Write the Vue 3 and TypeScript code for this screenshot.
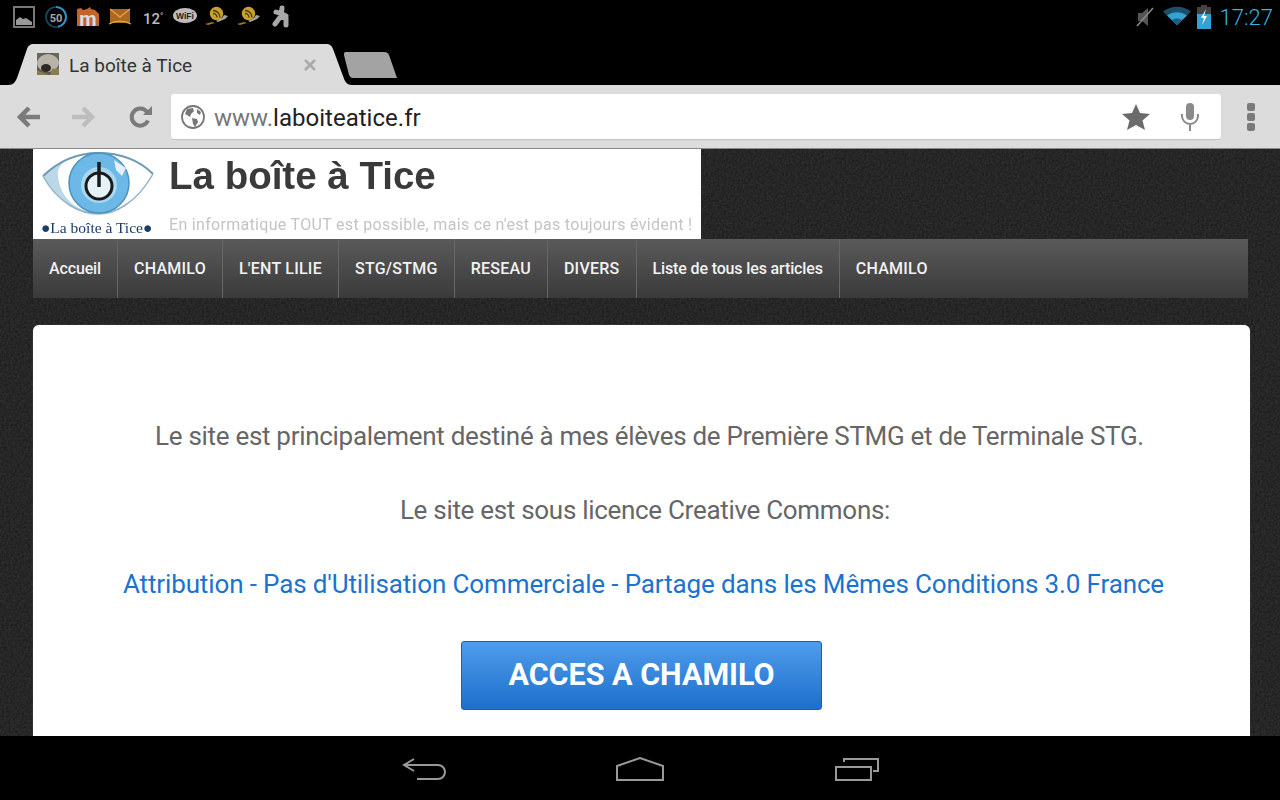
<template>
  <div class="screen">
    <div class="statusbar">
      <div class="notifs">
        <svg class="ico" viewBox="0 0 22 28"><rect x="1" y="4" width="20" height="20" fill="none" stroke="#777" stroke-width="2"/><path d="M3 22v-5l4-3 3 2 3-1 6 4v3z" fill="#999"/></svg>
        <svg class="ico" viewBox="0 0 22 28"><circle cx="11" cy="14" r="10" fill="none" stroke="#1c4a63" stroke-width="1.600"/><path d="M11 4a10 10 0 0 1 2 19.800" fill="none" stroke="#2a93c8" stroke-width="2"/><text x="11" y="18.500" text-anchor="middle" class="t50">50</text></svg>
        <svg class="ico" viewBox="0 0 22 28"><path d="M0 6l4-1 2 2 4-1 3-2 1 2 4 1 4 4v12H0z" fill="#c2652a"/><text x="11" y="23" text-anchor="middle" class="tm">m</text></svg>
        <svg class="ico" viewBox="0 0 22 28"><path d="M1 6h20v14H1z" fill="#a9691f"/><path d="M1 6l10 8 10-8" fill="none" stroke="#e0a040" stroke-width="1.400"/><path d="M0 21c7-4 14-4 22 0" fill="none" stroke="#d4b13c" stroke-width="1.200"/></svg>
        <span class="temp">12<small>°</small></span>
        <svg class="ico wide" viewBox="0 0 24 28"><ellipse cx="12" cy="12.500" rx="12" ry="7.500" fill="#bdbdbd"/><text x="12" y="15.500" text-anchor="middle" class="twifi">WiFi</text></svg>
        <svg class="ico" viewBox="0 0 22 28">
          <circle cx="11.500" cy="10.500" r="6.700" fill="#c9a02a"/>
          <path d="M8 10.500a4 4 0 0 1 4 4M8 7.500a7 7 0 0 1 7 7" fill="none" stroke="#4a3b08" stroke-width="1.300"/>
          <path d="M11 18l6-3 2-3 4 1-3 3-7 3z" fill="#a8a8a8"/>
          <path d="M0 21l7-2 3 1-7 2z" fill="#a5741c"/>
        </svg>
        <svg class="ico" viewBox="0 0 22 28">
          <circle cx="11.500" cy="10.500" r="6.700" fill="#c9a02a"/>
          <path d="M8 10.500a4 4 0 0 1 4 4M8 7.500a7 7 0 0 1 7 7" fill="none" stroke="#4a3b08" stroke-width="1.300"/>
          <path d="M11 18l6-3 2-3 4 1-3 3-7 3z" fill="#a8a8a8"/>
          <path d="M0 21l7-2 3 1-7 2z" fill="#a5741c"/>
        </svg>
        <svg class="ico" viewBox="0 0 22 28"><path d="M13 5l-1 8M7 9l6 2 4 2M12 13l-6 8M12 13l5 3v6" fill="none" stroke="#a8a8a8" stroke-width="5" stroke-linecap="round"/></svg>
      </div>
      <div class="sys">
        <svg class="mute" viewBox="0 0 20 24"><path d="M3 8h4l6-5v18l-6-5H3z" fill="#555"/><path d="M2 21L18 3" stroke="#888" stroke-width="1.600"/></svg>
        <svg class="wifi" viewBox="0 0 28 20"><path d="M14 19L0 5.500C8-1 20-1 28 5.500z" fill="#1d4f68"/><path d="M14 19L4 9.500C10 5 18 5 24 9.500z" fill="#33a3d6"/><path d="M14 19l-5-5c3-2 7-2 10 0z" fill="#1d5f80"/></svg>
        <svg class="batt" viewBox="0 0 14 24"><rect x="4" y="0" width="6" height="3" fill="#444"/><rect x="0" y="2" width="14" height="22" fill="#444"/><rect x="0" y="9" width="14" height="15" fill="#33a3d6"/><path d="M9 4L4 13h3l-2 7 5-9H7z" fill="#fff"/></svg>
        <span class="clock">17:27</span>
      </div>
    </div>

    <div class="tabstrip">
      <div class="tab">
        <svg class="favicon" viewBox="0 0 22 22">
          <rect width="22" height="22" fill="#5e5a50"/>
          <ellipse cx="11" cy="10" rx="11" ry="9" fill="#b8b3a8"/>
          <path d="M0 8l6-8h-6zM15 0h7v6z" fill="#6a665c"/>
          <ellipse cx="9" cy="15" rx="5" ry="4" fill="#2d2a26"/>
          <path d="M0 17l7 3 5 2H0zM15 16l7-1v7h-9z" fill="#8a7a55"/>
        </svg>
        <span class="tabtitle">La boîte à Tice</span>
        <svg class="close" viewBox="0 0 14 14"><path d="M2 2l10 10M12 2L2 12" stroke="#aaa" stroke-width="2.600"/></svg>
      </div>
      <div class="newtab"></div>
    </div>

    <div class="toolbar">
      <svg class="navbtn" viewBox="0 0 26 24"><path d="M25 12H6M14 3l-9 9 9 9" fill="none" stroke="#7b7b7b" stroke-width="4.500"/></svg>
      <svg class="navbtn" viewBox="0 0 26 24"><path d="M1 12h19M12 3l9 9-9 9" fill="none" stroke="#bdbdbd" stroke-width="4.500"/></svg>
      <svg class="navbtn" viewBox="0 0 26 24"><path d="M20 15.500A8.500 8.500 0 1 1 19 7" fill="none" stroke="#7b7b7b" stroke-width="4"/><path d="M15 10h9V1z" fill="#7b7b7b"/></svg>
      <div class="omnibox">
        <svg class="globe" viewBox="0 0 24 24"><circle cx="12" cy="12" r="11" fill="none" stroke="#777" stroke-width="1.800"/><path d="M6 4l6-1 1 3-3 3-1 3-3-2-2-1zM11 13l5 1 1 3-3 5-2-3zM16 4l4 3-1 3-3-2z" fill="#777"/></svg>
        <div class="url"><span class="scheme">www.</span>laboiteatice.fr</div>
        <svg class="star" viewBox="0 0 28 27"><path d="M14 1l4 9 10 1-7.500 6.500L23 27l-9-5-9 5 2.500-9.500L0 11l10-1z" fill="#6b6b6b"/></svg>
        <svg class="mic" viewBox="0 0 18 28"><rect x="5" y="0" width="8" height="17" rx="4" fill="#8a8a8a"/><path d="M1 11v2a8 8 0 0 0 16 0v-2M9 21v7" fill="none" stroke="#8a8a8a" stroke-width="2"/></svg>
      </div>
      <div class="menu"><i></i><i></i><i></i></div>
    </div>

    <div class="page">
      <div class="banner">
        <div class="logo">
          <svg class="eye" viewBox="0 0 112 64">
            <path d="M1 24C20 6 38 1 56 1s38 4 55 21C94 52 72 62 56 62S16 52 1 24z" fill="#fff"/>
            <path d="M1 24C16 52 40 62 56 62c-22-3-38-16-40-38-1-6 2-10 6-14C14 14 7 19 1 24z" fill="#bcd8e8"/>
            <path d="M1 24C20 6 38 1 56 1s38 4 55 21" fill="none" stroke="#6f9ab3" stroke-width="2"/>
            <path d="M1 24C16 52 40 62 56 62s38-10 55-40" fill="none" stroke="#8fb4c9" stroke-width="1.500"/>
            <circle cx="57" cy="31" r="30" fill="#6cb8e6" stroke="#4e92bd" stroke-width="1.500"/>
            <path d="M72 8l12 8-4 8-6-6z" fill="#e4f1f8"/>
            <circle cx="57" cy="33" r="18" fill="#a9d6f1"/>
            <circle cx="57" cy="34" r="13" fill="#e6f2f8" stroke="#1a1a1a" stroke-width="3"/>
            <path d="M57 10v25" stroke="#1a1a1a" stroke-width="3.500"/>
          </svg>
          <div class="caption">●La boîte à Tice●</div>
        </div>
        <div class="brand">
          <div class="brandtitle">La boîte à Tice</div>
          <div class="brandsub">En informatique TOUT est possible, mais ce n'est pas toujours évident !</div>
        </div>
      </div>
      <nav class="mainnav">
        <a v-for="item in navItems" :key="item.id" class="navitem" :class="{ lower: item.lower }">{{ item.label }}</a>
      </nav>
      <main class="card">
        <p class="intro">Le site est principalement destiné à mes élèves de Première STMG et de Terminale STG.</p>
        <p class="licence">Le site est sous licence Creative Commons:</p>
        <p class="link">Attribution - Pas d'Utilisation Commerciale - Partage dans les Mêmes Conditions 3.0 France</p>
        <button class="cta">ACCES A CHAMILO</button>
      </main>
    </div>

    <div class="navbar">
      <svg class="softkey back" viewBox="0 0 44 24"><path d="M12 2L2 8l10 6M2 8h34a6.500 6.500 0 0 1 0 14H15" fill="none" stroke="#999" stroke-width="2"/></svg>
      <svg class="softkey home" viewBox="0 0 48 24"><path d="M1 9L24 1l23 8v14H1z" fill="none" stroke="#999" stroke-width="2"/></svg>
      <svg class="softkey recent" viewBox="0 0 44 24"><path d="M1 10h35v13H1zM9 5V2h34v12h-5" fill="none" stroke="#999" stroke-width="2"/></svg>
    </div>
  </div>
</template>

<script setup lang="ts">
interface NavItem {
  id: number
  label: string
  lower?: boolean
}

const navItems: NavItem[] = [
  { id: 1, label: 'Accueil', lower: true },
  { id: 2, label: 'CHAMILO' },
  { id: 3, label: "L'ENT LILIE" },
  { id: 4, label: 'STG/STMG' },
  { id: 5, label: 'RESEAU' },
  { id: 6, label: 'DIVERS' },
  { id: 7, label: 'Liste de tous les articles', lower: true },
  { id: 8, label: 'CHAMILO' }
]
</script>

<style>
html, body { margin: 0; background: #000; }
</style>

<style scoped>
.screen {
  width: 1280px;
  height: 800px;
  display: flex;
  flex-direction: column;
  overflow: hidden;
  font-family: Roboto, "Liberation Sans", sans-serif;
  background: #000;
}

/* status bar */
.statusbar {
  height: 40px;
  flex: none;
  display: flex;
  justify-content: space-between;
  padding: 3px 7px 0 13px;
  box-sizing: border-box;
}
.notifs { display: flex; gap: 10px; }
.ico { width: 22px; height: 28px; display: block; overflow: visible; }
.ico.wide { width: 24px; margin-right: -2px; }
.t50 { font: 700 11px Roboto, sans-serif; fill: #aaa; }
.tm { font: 700 20px Roboto, sans-serif; fill: #ddd; }
.twifi { font: 700 8.500px "Liberation Sans", sans-serif; fill: #222; }
.temp { width: 22px; padding-left: 2px; box-sizing: border-box; font-size: 15px; font-weight: 500; color: #bbb; line-height: 26px; }
.temp small { font-size: 9px; vertical-align: 5px; }
.sys { display: flex; align-items: flex-start; }
.mute { width: 20px; height: 24px; margin: 2px 8px 0 0; }
.wifi { width: 28px; height: 20px; margin: 3px 6px 0 0; }
.batt { width: 14px; height: 24px; margin: 2px 9px 0 0; }
.clock { font-size: 22px; font-weight: 300; color: #33b5e5; line-height: 30px; }

/* tabs */
.tabstrip {
  height: 45px;
  flex: none;
  display: flex;
  align-items: flex-end;
}
.tab {
  width: 344px;
  height: 41px;
  margin-left: 8px;
  padding-left: 29px;
  box-sizing: border-box;
  display: flex;
  align-items: center;
  background: #dcdcdc;
  clip-path: path("M0 41C6 41 7 38 9 34L19 5C20 2 22 0 26 0H318C322 0 324 2 325 5L335 32C337 38 339 41 344 41Z");
}
.favicon { width: 22px; height: 22px; margin-top: -1px; }
.tabtitle { margin-left: 10px; font-size: 19px; color: #333; width: 232px; padding-top: 1px; }
.close { width: 14px; height: 14px; margin-left: 2px; }
.newtab {
  width: 53px;
  height: 26px;
  margin: 0 0 7px -8px;
  background: #a3a3a3;
  clip-path: path("M2 0H40C43 0 44 1 45 3L53 26H9C7 26 6 25 5 23L0 3C0 1 0 0 2 0Z");
}

/* toolbar */
.toolbar {
  height: 64px;
  flex: none;
  box-sizing: border-box;
  background: #dcdcdc;
  border-bottom: 1px solid #8a8a8a;
  display: flex;
  align-items: flex-start;
  padding: 9px 0 0 15px;
}
.navbtn { width: 26px; height: 24px; margin: 11px 30px 0 0; }
.navbtn:nth-child(3) { margin-right: 17px; margin-left: 1px; }
.omnibox {
  width: 1050px;
  height: 45px;
  background: #fff;
  border-radius: 3px;
  box-shadow: 0 1px 1px #c4c4c4;
  display: flex;
  align-items: center;
  padding-left: 10px;
  box-sizing: border-box;
}
.globe { width: 24px; height: 24px; }
.url { margin-left: 9px; width: 908px; font-size: 24px; color: #222; padding-top: 2px; letter-spacing: 0.02px; }
.scheme { color: #777; }
.star { width: 28px; height: 27px; }
.mic { width: 18px; height: 28px; margin-left: 31px; }
.menu { margin: 9px 0 0 26px; display: flex; flex-direction: column; gap: 2px; }
.menu i { width: 8px; height: 8px; border-radius: 2px; background: #7a7a7a; display: block; }

/* page */
.page {
  flex: 1;
  min-height: 0;
  overflow: hidden;
  padding: 0 30px 0 33px;
  background-color: #2d2d2d;
  background-image: url("data:image/svg+xml,%3Csvg xmlns='http://www.w3.org/2000/svg' width='200' height='200'%3E%3Cfilter id='n'%3E%3CfeTurbulence type='fractalNoise' baseFrequency='.45' numOctaves='2'/%3E%3CfeColorMatrix values='0 0 0 0 0 0 0 0 0 0 0 0 0 0 0 0 0 0 .7 -.2'/%3E%3C/filter%3E%3Crect width='200' height='200' filter='url(%23n)'/%3E%3C/svg%3E");
}
.banner {
  width: 668px;
  height: 90px;
  background: #fff;
  display: flex;
  overflow: hidden;
}
.logo { width: 136px; flex: none; padding: 3px 0 0 9px; box-sizing: border-box; }
.eye { display: block; width: 112px; height: 64px; filter: blur(0.5px); }
.caption {
  margin-top: 3px;
  font-family: "Liberation Serif", serif;
  font-size: 15.500px;
  line-height: 17px;
  color: #1c3d66;
  white-space: nowrap;
  margin-left: -1px;
  filter: blur(0.3px);
}
.brand { filter: blur(0.4px); }
.brandtitle {
  font-family: "Liberation Sans", sans-serif;
  font-weight: 700;
  font-size: 38.500px;
  line-height: 42px;
  margin-top: 6px;
  color: #3a3a3a;
  white-space: nowrap;
}
.brandsub {
  margin-top: 19px;
  font-family: Roboto, sans-serif;
  font-size: 16px;
  line-height: 18px;
  letter-spacing: 0.31px;
  color: #c4c4c4;
  white-space: nowrap;
}
.mainnav {
  width: 1215px;
  height: 59px;
  display: flex;
  background: linear-gradient(#5a5a5a, #3a3a3a);
}
.navitem {
  padding: 0 16px;
  line-height: 59px;
  font-size: 16px;
  font-weight: 500;
  letter-spacing: 0.25px;
  color: #f2f2f2;
  border-right: 1px solid #666;
  white-space: nowrap;
}
.navitem.lower { letter-spacing: -0.14px; }
.navitem:last-child { border-right: 0; }
.card {
  width: 1217px;
  height: 460px;
  margin-top: 27px;
  background: #fff;
  border-radius: 6px 6px 0 0;
  box-shadow: 0 0 1px #888;
  display: flex;
  flex-direction: column;
  align-items: center;
  padding-top: 92px;
  box-sizing: border-box;
}
.card p {
  margin: 0 0 35px;
  font-size: 26px;
  line-height: 39px;
  color: #666;
  white-space: nowrap;
  letter-spacing: -0.3px;
}
.card .intro { padding-left: 16px; }
.card .licence { padding-left: 7px; }
.card .link { color: #1a73d0; margin-bottom: 37px; letter-spacing: -0.13px; padding-left: 4px; }
.cta {
  width: 361px;
  height: 69px;
  border: 1px solid #1d5fa8;
  border-radius: 3px;
  background: linear-gradient(#4f9cec, #1c6fcb);
  color: #fff;
  font-family: Roboto, sans-serif;
  font-size: 30.500px;
  font-weight: 700;
  padding: 0 0 2px;
}

/* android nav */
.navbar {
  height: 64px;
  flex: none;
  background: #000;
  display: flex;
  align-items: flex-start;
  padding: 21px 0 0 402px;
  box-sizing: border-box;
}
.softkey { height: 24px; display: block; }
.back { width: 44px; }
.home { width: 48px; margin-left: 170px; }
.recent { width: 44px; margin-left: 171px; }
</style>
